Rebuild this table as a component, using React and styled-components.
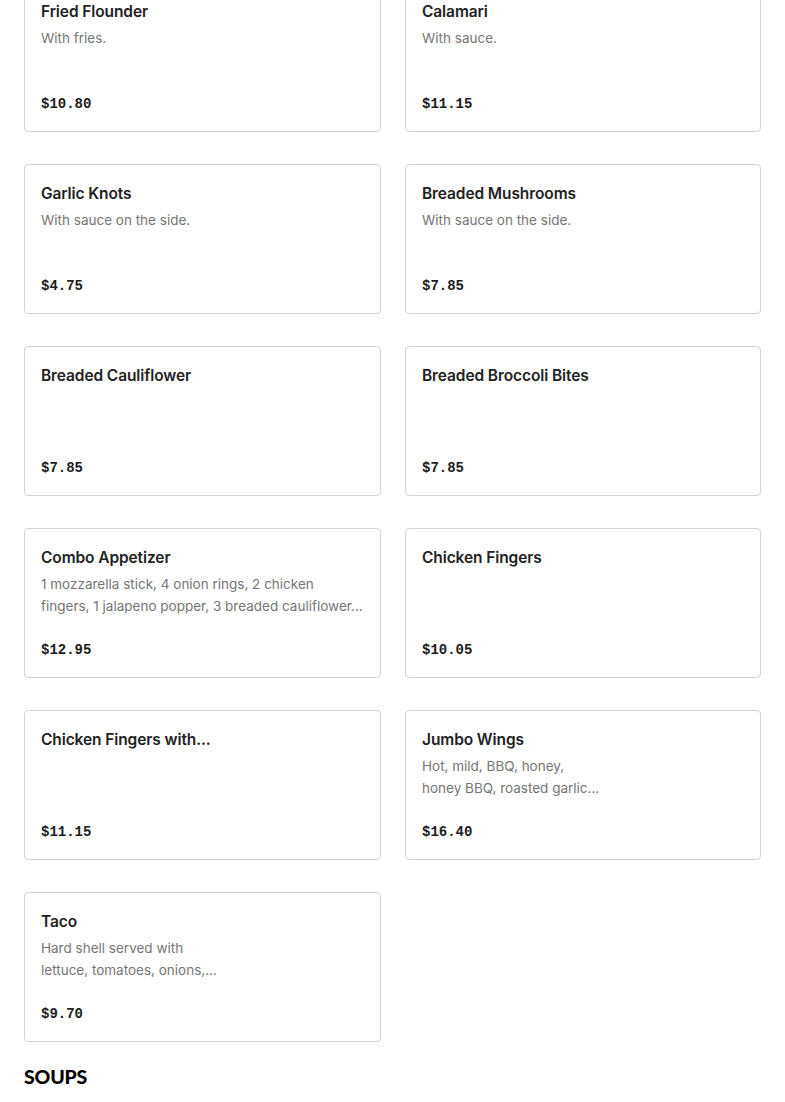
import React from 'react'
import styled, { createGlobalStyle } from 'styled-components'

const GlobalStyle = createGlobalStyle`
body {
    margin: 0;
    background: #fff;
    font-family: Inter, "Noto Sans", sans-serif;
    overflow: hidden;
}
`

const Page = styled.div`
padding: 0 24px;
`

const Grid = styled.div`
display: grid;
grid-template-columns: 357px 356px;
column-gap: 24px;
row-gap: 32px;
margin-top: -18px;
`

const Card = styled.div`
box-sizing: border-box;
height: 150px;
border: 1px solid #d3d3d3;
border-radius: 4px;
padding: 17px 16px 16px;
display: flex;
flex-direction: column;
`

const Title = styled.div`
font-size: 15.5px;
font-weight: 600;
line-height: 24px;
color: #222;
letter-spacing: -0.1px;
`

const Desc = styled.div`
margin-top: 3px;
font-size: 13.5px;
line-height: 22px;
color: #767676;
white-space: nowrap;
`

const Price = styled.div`
margin-top: auto;
font-family: "Liberation Mono", monospace;
font-weight: 700;
font-size: 14px;
line-height: 24px;
color: #1c1c1c;
transform: translateY(1px);
`

const Section = styled.h2`
margin: 23px 0 0;
font-family: "Lato", sans-serif;
font-weight: 900;
font-size: 19.5px;
line-height: 24px;
color: #000;
letter-spacing: -0.2px;
`

const items = [
    { name: 'Fried Flounder', lines: ['With fries.'], price: '$10.80' },
    { name: 'Calamari', lines: ['With sauce.'], price: '$11.15' },
    { name: 'Garlic Knots', lines: ['With sauce on the side.'], price: '$4.75' },
    { name: 'Breaded Mushrooms', lines: ['With sauce on the side.'], price: '$7.85' },
    { name: 'Breaded Cauliflower', lines: [], price: '$7.85' },
    { name: 'Breaded Broccoli Bites', lines: [], price: '$7.85' },
    { name: 'Combo Appetizer', lines: ['1 mozzarella stick, 4 onion rings, 2 chicken', 'fingers, 1 jalapeno popper, 3 breaded cauliflower...'], price: '$12.95' },
    { name: 'Chicken Fingers', lines: [], price: '$10.05' },
    { name: 'Chicken Fingers with...', lines: [], price: '$11.15' },
    { name: 'Jumbo Wings', lines: ['Hot, mild, BBQ, honey,', 'honey BBQ, roasted garlic...'], price: '$16.40' },
    { name: 'Taco', lines: ['Hard shell served with', 'lettuce, tomatoes, onions,...'], price: '$9.70' },
]

const MenuCard = ({ name, lines, price }) => (
    <Card>
        <Title>{name}</Title>
        {lines.length > 0 && (
            <Desc>
                {lines.map((l, i) => <div key={i}>{l}</div>)}
            </Desc>
        )}
        <Price>{price}</Price>
    </Card>
)

const App = () => (
    <Page>
        <GlobalStyle />
        <Grid>
            {items.map(item => <MenuCard key={item.name} {...item} />)}
        </Grid>
        <Section>SOUPS</Section>
    </Page>
)

export default App
